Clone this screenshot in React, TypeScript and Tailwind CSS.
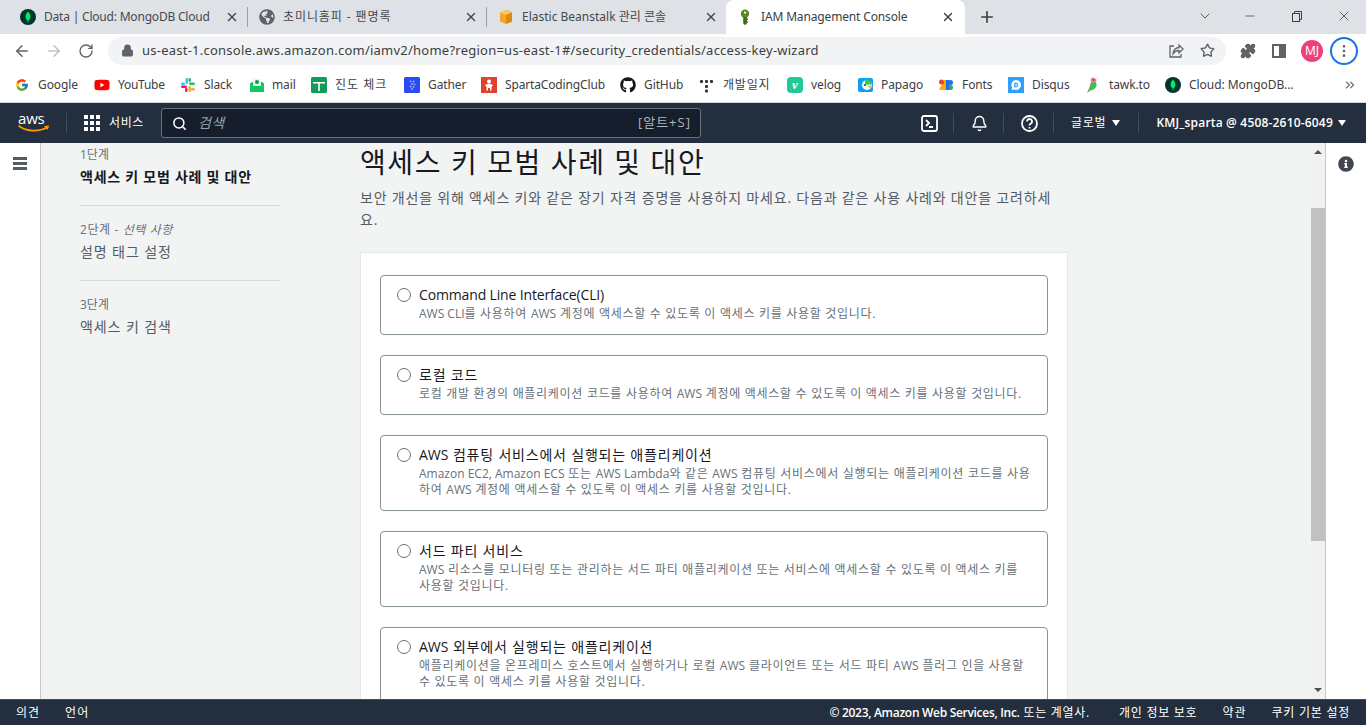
import type { ReactNode } from "react";
import {
  ArrowLeft,
  ArrowRight,
  RotateCw,
  Lock,
  Star,
  Puzzle,
  ChevronDown,
  Minus,
  X,
  Plus,
  Search,
  Bell,
  MoreVertical,
  ChevronsRight,
} from "lucide-react";
import { FaGithub, FaYoutube, FaInfoCircle, FaGlobeAmericas } from "react-icons/fa";
import { FcGoogle } from "react-icons/fc";

const uiFont = "font-['Noto_Sans','Noto_Sans_CJK_KR',sans-serif]";
const awsFont = "font-['Open_Sans','Noto_Sans_CJK_KR',sans-serif]";

function MongoLeaf({ size = 16 }: { size?: number }) {
  return (
    <svg width={size} height={size} viewBox="0 0 16 16" className="shrink-0">
      <circle cx="8" cy="8" r="8" fill="#023430" />
      <path d="M8 2.500c1.800 2 2.600 3.800 2.400 5.500-.2 1.700-1.200 3-2 3.500v2h-.8v-2c-.8-.5-1.800-1.800-2-3.500C5.400 6.300 6.200 4.500 8 2.500z" fill="#00ed64" />
    </svg>
  );
}

function BeanstalkIcon() {
  return (
    <svg width="16" height="16" viewBox="0 0 16 16" className="shrink-0">
      <path d="M8 1l6 2.500v9L8 15l-6-2.500v-9z" fill="#f5a623" />
      <path d="M8 1v14l6-2.500v-9z" fill="#d98a12" />
      <path d="M2 3.500L8 6l6-2.500L8 1z" fill="#fbc661" />
    </svg>
  );
}

function KeyIcon() {
  return (
    <svg width="16" height="16" viewBox="0 0 16 16" className="shrink-0">
      <circle cx="8" cy="4.800" r="4.200" fill="#5c8a24" />
      <circle cx="8" cy="3.600" r="1.100" fill="#fff" />
      <path d="M6.200 8h3.600v1.500h1.200V11H9.800v1h1v1.500h-1V15L8 16l-1.800-1.500z" fill="#3f6b1a" />
    </svg>
  );
}

const tabs = [
  { title: "Data | Cloud: MongoDB Cloud", text: "tracking-[-0.2px]", icon: <MongoLeaf /> },
  { title: "초미니홈피 - 팬명록", text: "tracking-[0.9px]", icon: <FaGlobeAmericas size={16} className="shrink-0 text-[#5f6368]" /> },
  { title: "Elastic Beanstalk 관리 콘솔", text: "tracking-normal", icon: <BeanstalkIcon /> },
];

function ChromeTabs() {
  return (
    <div className={`flex h-[34px] items-end bg-[#dee1e6] pl-[9px] ${uiFont}`}>
      {tabs.map((t, i) => (
        <div key={t.title} className="flex h-[34px] w-[239px] items-center pl-[11px] pr-2">
          {t.icon}
          <span className={`ml-2 flex-1 truncate text-xs text-[#45494d] ${t.text}`}>{t.title}</span>
          <X size={14} strokeWidth={2.4} className="text-[#45494d]" />
          {i < 2 && <div className="ml-2 mr-[-8px] h-5 w-px bg-[#9aa0a6]" />}
        </div>
      ))}
      <div className="flex h-[34px] w-[239px] items-center rounded-t-lg bg-white pl-[11px] pr-[10px]">
        <KeyIcon />
        <span className="ml-2 flex-1 truncate text-xs tracking-[-0.15px] text-[#3c4043]">IAM Management Console</span>
        <X size={14} strokeWidth={2.4} className="text-[#3c4043]" />
      </div>
      <Plus size={18} strokeWidth={2.2} className="mb-2 ml-[13px] text-[#3c4043]" />
      <div className="mb-[10px] ml-auto flex items-center text-[#3c4043]">
        <ChevronDown size={16} strokeWidth={1.2} className="mr-[30px]" />
        <Minus size={14} strokeWidth={1.2} className="mr-[34px]" />
        <svg width="12" height="12" viewBox="0 0 12 12" className="mr-[33px]" fill="none" stroke="currentColor">
          <rect x="1.500" y="3.500" width="7" height="8" />
          <path d="M3.500 3.500v-2h7v8h-2" />
        </svg>
        <X size={16} strokeWidth={1.2} className="mr-[14px]" />
      </div>
    </div>
  );
}

function AddressBar() {
  return (
    <div className={`flex h-[33px] items-center bg-white ${uiFont}`}>
      <ArrowLeft size={18} className="ml-[13px] text-[#5f6368]" />
      <ArrowRight size={18} className="ml-[14px] text-[#bdc1c6]" />
      <RotateCw size={16} className="ml-[15px] text-[#5f6368]" />
      <div className="ml-[14px] flex h-[28px] w-[1118px] items-center rounded-full bg-[#f1f3f4] pl-[13px]">
        <Lock size={13} className="fill-[#5f6368] text-[#5f6368]" />
        <span className="ml-2 text-[13px] tracking-[0.24px] text-[#3c4043]">us-east-1.console.aws.amazon.com/iamv2/home?region=us-east-1#/security_credentials/access-key-wizard</span>
        <svg width="16" height="16" viewBox="0 0 16 16" fill="none" stroke="#5f6368" strokeWidth="1.300" className="ml-auto">
          <path d="M6 3H2v11h11v-3" />
          <path d="M5 11c0-4 3-6.500 6-6.500V2l4 4-4 4V7.500C8.500 7.500 6.500 8.500 5 11z" />
        </svg>
        <Star size={15} strokeWidth={2.2} className="ml-4 mr-[11px] text-[#5f6368]" />
      </div>
      <Puzzle size={16} className="ml-[14px] fill-[#5f6368] text-[#5f6368]" />
      <svg width="14" height="14" viewBox="0 0 14 14" className="ml-[16px]">
        <path d="M0 0h14v14H0zM2 2v10h5V2z" fill="#5f6368" fillRule="evenodd" />
      </svg>
      <div className="ml-[15px] flex h-[22px] w-[22px] items-center justify-center rounded-full bg-[#ec407a] text-xs text-white">MJ</div>
      <div className="ml-[7px] flex h-[28px] w-[28px] items-center justify-center rounded-full border-2 border-[#1a73e8]">
        <MoreVertical size={16} className="text-[#5f6368]" />
      </div>
    </div>
  );
}

const bookmarks: { label: string; width: string; text?: string; icon: ReactNode }[] = [
  { label: "Google", width: "w-[79px]", text: "-ml-px tracking-[-0.1px]", icon: <FcGoogle size={14} /> },
  { label: "YouTube", width: "w-[86px]", text: "tracking-[-0.25px]", icon: <FaYoutube size={16} className="text-[#f00]" /> },
  {
    label: "Slack",
    width: "w-[69px]",
    text: "tracking-[-0.1px]",
    icon: (
      <svg width="16" height="16" viewBox="0 0 16 16">
        <rect x="5.500" y="1" width="2.500" height="6" rx="1.200" fill="#36c5f0" />
        <rect x="1" y="5.500" width="4" height="2.500" rx="1.200" fill="#36c5f0" />
        <rect x="1" y="8.500" width="6" height="2.500" rx="1.200" fill="#e01e5a" />
        <rect x="5" y="11" width="2.500" height="4" rx="1.200" fill="#e01e5a" />
        <rect x="8.500" y="9" width="2.500" height="6" rx="1.200" fill="#ecb22e" />
        <rect x="11" y="11" width="4" height="2.500" rx="1.200" fill="#ecb22e" />
        <rect x="9" y="5.500" width="6" height="2.500" rx="1.200" fill="#2eb67d" />
        <rect x="8.500" y="1" width="2.500" height="4" rx="1.200" fill="#2eb67d" />
      </svg>
    ),
  },
  {
    label: "mail",
    width: "w-[62px]",
    text: "-ml-px tracking-[-0.1px]",
    icon: (
      <svg width="16" height="16" viewBox="0 0 16 16">
        <path d="M1 6.500L8 2l7 4.500V15H1z" fill="#0fc15f" />
        <rect x="4" y="2" width="8" height="7" fill="#e8f7ee" />
        <circle cx="8" cy="5" r="2" fill="#0a9c4c" />
        <path d="M1 7l7 5 7-5v8H1z" fill="#12c863" />
      </svg>
    ),
  },
  {
    label: "진도 체크",
    width: "w-[93px]",
    text: "tracking-[1px]",
    icon: (
      <svg width="16" height="16" viewBox="0 0 16 16">
        <rect width="16" height="16" rx="1.500" fill="#0f9d58" />
        <path d="M2 5h12v1.500H8.800V14H7.200V6.500H2z" fill="#fff" />
      </svg>
    ),
  },
  {
    label: "Gather",
    width: "w-[77px]",
    text: "tracking-[-0.1px]",
    icon: (
      <svg width="16" height="16" viewBox="0 0 16 16">
        <rect width="16" height="16" rx="1.500" fill="#2b4bf2" />
        <g fill="#8fa4ff">
          <circle cx="6.500" cy="4.500" r="1" />
          <circle cx="9.500" cy="4.500" r="1" />
          <circle cx="8" cy="7" r="1" />
          <circle cx="10.500" cy="7.500" r="1" />
          <circle cx="6.500" cy="9.500" r="1" />
          <circle cx="9.500" cy="10" r="1" />
          <circle cx="8" cy="12" r="1" />
        </g>
      </svg>
    ),
  },
  {
    label: "SpartaCodingClub",
    width: "w-[139px]",
    text: "tracking-[-0.15px]",
    icon: (
      <svg width="16" height="16" viewBox="0 0 16 16">
        <rect width="16" height="16" fill="#e2412c" />
        <circle cx="8" cy="4.500" r="2" fill="#fff" />
        <path d="M4 8l4-1.500L12 8l-1.500 2v3.500H9V11H7v2.500H5.500V10z" fill="#fff" />
      </svg>
    ),
  },
  { label: "GitHub", width: "w-[79px]", text: "tracking-[-0.1px]", icon: <FaGithub size={16} className="text-[#181717]" /> },
  {
    label: "개발일지",
    width: "w-[88px]",
    text: "tracking-[0.8px]",
    icon: (
      <svg width="16" height="16" viewBox="0 0 16 16" fill="#333">
        <rect x="1" y="3" width="3" height="3" rx="1" />
        <rect x="6" y="3" width="3" height="3" rx="1" />
        <rect x="11" y="3" width="3" height="3" rx="1" />
        <rect x="6" y="8" width="3" height="3" rx="1" />
        <rect x="6" y="12.500" width="3" height="3" rx="1" />
      </svg>
    ),
  },
  {
    label: "velog",
    width: "w-[71px]",
    text: "tracking-[-0.1px]",
    icon: (
      <div className="flex h-4 w-4 items-center justify-center rounded-sm bg-[#20c997] font-['Liberation_Serif',serif] text-[13px] font-bold italic leading-none text-white">
        v
      </div>
    ),
  },
  {
    label: "Papago",
    width: "w-[80px]",
    text: "-ml-px tracking-[-0.1px]",
    icon: (
      <svg width="16" height="16" viewBox="0 0 16 16">
        <rect y="1" width="15" height="14" rx="2" fill="#0a9ef5" />
        <circle cx="9" cy="8" r="5" fill="#fff" />
        <path d="M8 2c3.500 0 6 2.500 6 5.500H8.500C7 7.500 6 5 8 2z" fill="#2ec866" />
        <path d="M9 8.500h6.500L12 11.500z" fill="#f6c026" />
        <circle cx="7" cy="8" r="1" fill="#1c2b3a" />
      </svg>
    ),
  },
  {
    label: "Fonts",
    width: "w-[70px]",
    text: "tracking-[-0.1px]",
    icon: (
      <svg width="16" height="16" viewBox="0 0 16 16">
        <path d="M1 13L6 3h2v10z" fill="#f9ab00" />
        <circle cx="3.500" cy="5" r="2.500" fill="#ea4335" />
        <path d="M8 3h3v10H8z" fill="#1a73e8" />
        <circle cx="12.500" cy="5.500" r="2.500" fill="#1a73e8" />
        <path d="M11 8h1.500a2.500 2.500 0 0 1 0 5H11z" fill="#34a853" />
      </svg>
    ),
  },
  {
    label: "Disqus",
    width: "w-[77px]",
    text: "tracking-[-0.1px]",
    icon: (
      <svg width="16" height="16" viewBox="0 0 16 16">
        <rect width="16" height="16" fill="#2e9fff" />
        <path d="M8 3a5 5 0 1 1-2 9.600L3.500 13l.7-2.300A5 5 0 0 1 8 3z" fill="#fff" />
        <path d="M6.200 5.800h1.900a2.200 2.200 0 0 1 0 4.400H6.200zM7.500 7v2h.6a1 1 0 0 0 0-2z" fill="#2e9fff" fillRule="evenodd" />
      </svg>
    ),
  },
  {
    label: "tawk.to",
    width: "w-[80px]",
    text: "tracking-[-0.1px]",
    icon: (
      <svg width="16" height="16" viewBox="0 0 16 16">
        <path d="M7 4c3-1 5 1 4.500 4.500C11 11.500 8 13 5.500 13.500L2 16l1.500-3.500C5 10 5 6 7 4z" fill="#49b855" />
        <circle cx="8" cy="3" r="2.500" fill="#ee7fa0" />
        <circle cx="8.500" cy="3" r=".7" fill="#222" />
        <path d="M10 2l2 1-2 1z" fill="#d9526f" />
      </svg>
    ),
  },
  { label: "Cloud: MongoDB...", width: "w-[178px]", text: "tracking-[-0.05px]", icon: <MongoLeaf /> },
];

function Bookmarks() {
  return (
    <div className={`flex h-[35px] items-center bg-white pl-[15px] ${uiFont}`}>
      {bookmarks.map((b) => (
        <div key={b.label} className={`flex shrink-0 items-center ${b.width}`}>
          <div className="flex w-[24px] shrink-0 items-center">{b.icon}</div>
          <span className={`whitespace-nowrap text-xs text-[#3c4043] ${b.text ?? ""}`}>{b.label}</span>
        </div>
      ))}
      <ChevronsRight size={14} className="text-[#5f6368]" />
    </div>
  );
}

function NavDivider({ className }: { className: string }) {
  return <div className={`h-5 w-px bg-[#414d5c] ${className}`} />;
}

function AwsNav() {
  return (
    <nav className={`flex h-[41px] items-center border-t border-[#d5dbdb] bg-[#232f3e] text-white ${awsFont}`}>
      <div className="relative ml-[18px] h-[30px] w-[32px] shrink-0">
        <span className="absolute left-0 top-[1px] text-[15px] leading-[18px] tracking-[-0.2px]">aws</span>
        <svg width="32" height="9" viewBox="0 0 32 9" className="absolute left-0 top-[17px]">
          <path d="M1 1c8 6 20 6 29 1" fill="none" stroke="#ff9900" strokeWidth="1.600" strokeLinecap="round" />
          <path d="M26 1l5-.5-1.500 4.500z" fill="#ff9900" />
        </svg>
      </div>
      <NavDivider className="ml-[16px]" />
      <svg width="16" height="16" viewBox="0 0 16 16" fill="#fff" className="ml-[17px]">
        {[0, 6, 12].flatMap((x) =>
          [0, 6, 12].map((y) => <rect key={`${x}-${y}`} x={x} y={y} width="4" height="4" />),
        )}
      </svg>
      <span className="ml-[9px] text-xs tracking-[0.6px]">서비스</span>
      <div className="ml-[17px] flex h-[30px] w-[540px] items-center rounded-[3px] border border-[#687078] bg-[#161e2d] pl-[10px] pr-[9px]">
        <Search size={15} strokeWidth={2.4} />
        <span className="ml-[11px] text-sm italic tracking-[0.5px] text-[#95a5a6]">검색</span>
        <span className="ml-auto text-[13px] tracking-[1px] text-[#aab7b8]">[알트+S]</span>
      </div>
      <svg width="17" height="17" viewBox="0 0 17 17" fill="none" stroke="#fff" strokeWidth="1.800" className="ml-[220px]">
        <rect x="1" y="1" width="15" height="15" rx="2" />
        <path d="M5 5l3 3-3 3M8 12h4" />
      </svg>
      <NavDivider className="ml-[15px]" />
      <Bell size={17} strokeWidth={2} className="ml-[17px]" />
      <NavDivider className="ml-[15px]" />
      <svg width="17" height="17" viewBox="0 0 17 17" fill="none" stroke="#fff" strokeWidth="1.800" className="ml-[17px]">
        <circle cx="8.500" cy="8.500" r="7.500" />
        <path d="M6 6.500a2.500 2.500 0 1 1 3.500 2.300c-.7.4-1 .8-1 1.700M8.500 12v1.500" />
      </svg>
      <NavDivider className="ml-[15px]" />
      <span className="ml-[17px] text-xs tracking-[0.8px]">글로벌</span>
      <span className="ml-[6px] h-0 w-0 border-x-[4px] border-t-[6px] border-x-transparent border-t-white" />
      <NavDivider className="ml-[18px]" />
      <span className="ml-[17px] text-xs font-semibold tracking-[0.18px]">KMJ_sparta @ 4508-2610-6049</span>
      <span className="ml-[5px] h-0 w-0 border-x-[4px] border-t-[6px] border-x-transparent border-t-white" />
    </nav>
  );
}

function WizardSteps() {
  return (
    <aside className="ml-[39px] w-[200px] shrink-0 pt-[4px]">
      <p className="text-xs leading-4 text-[#687078]">1단계</p>
      <p className="mt-[3px] border-b border-[#d5dbdb] pb-[17px] text-sm font-semibold leading-[22px] tracking-[0.75px] text-[#16191f]">
        액세스 키 모범 사례 및 대안
      </p>
      <p className="mt-4 text-xs leading-4 tracking-[0.6px] text-[#687078]">
        2단계 - <span className="italic">선택 사항</span>
      </p>
      <p className="mt-[3px] border-b border-[#d5dbdb] pb-[17px] text-sm leading-[22px] tracking-[0.9px] text-[#545b64]">설명 태그 설정</p>
      <p className="mt-4 text-xs leading-4 text-[#687078]">3단계</p>
      <p className="mt-[3px] text-sm leading-[22px] tracking-[0.9px] text-[#545b64]">액세스 키 검색</p>
    </aside>
  );
}

// latin runs keep normal spacing, only the Korean needs widening
function L({ children }: { children: ReactNode }) {
  return <span className="tracking-normal">{children}</span>;
}

const options: { key: string; title: ReactNode; desc: ReactNode }[] = [
  {
    key: "cli",
    title: <span className="tracking-[-0.15px]">Command Line Interface(CLI)</span>,
    desc: (
      <>
        <L>AWS CLI</L>를 사용하여 <L>AWS</L> 계정에 액세스할 수 있도록 이 액세스 키를 사용할 것입니다.
      </>
    ),
  },
  {
    key: "local",
    title: "로컬 코드",
    desc: (
      <>
        로컬 개발 환경의 애플리케이션 코드를 사용하여 <L>AWS</L> 계정에 액세스할 수 있도록 이 액세스 키를 사용할 것입니다.
      </>
    ),
  },
  {
    key: "compute",
    title: (
      <>
        <L>AWS</L> 컴퓨팅 서비스에서 실행되는 애플리케이션
      </>
    ),
    desc: (
      <>
        <L>Amazon EC2, Amazon ECS</L> 또는 <L>AWS Lambda</L>와 같은 <L>AWS</L> 컴퓨팅 서비스에서 실행되는 애플리케이션 코드를 사용
        <br />
        하여 <L>AWS</L> 계정에 액세스할 수 있도록 이 액세스 키를 사용할 것입니다.
      </>
    ),
  },
  {
    key: "third",
    title: "서드 파티 서비스",
    desc: (
      <>
        <L>AWS</L> 리소스를 모니터링 또는 관리하는 서드 파티 애플리케이션 또는 서비스에 액세스할 수 있도록 이 액세스 키를
        <br />
        사용할 것입니다.
      </>
    ),
  },
  {
    key: "outside",
    title: (
      <>
        <L>AWS</L> 외부에서 실행되는 애플리케이션
      </>
    ),
    desc: (
      <>
        애플리케이션을 온프레미스 호스트에서 실행하거나 로컬 <L>AWS</L> 클라이언트 또는 서드 파티 <L>AWS</L> 플러그 인을 사용할
        <br />수 있도록 이 액세스 키를 사용할 것입니다.
      </>
    ),
  },
];

function OptionCard({ title, desc }: { title: ReactNode; desc: ReactNode }) {
  return (
    <label className="flex rounded-sm border border-[#879596] pb-3 pl-[16px] pr-[10px] pt-[9px]">
      <span className="mt-[3px] h-[14px] w-[14px] shrink-0 rounded-full border border-[#687078] bg-white" />
      <span className="ml-2 block whitespace-nowrap">
        <span className="block text-sm leading-5 tracking-[0.8px] text-[#16191f]">{title}</span>
        <span className="mt-px block text-xs leading-4 tracking-[0.7px] text-[#687078]">{desc}</span>
      </span>
    </label>
  );
}

function MainColumn() {
  return (
    <section className="ml-[80px] w-[708px] shrink-0">
      <h1 className="pt-px text-[28px] font-normal leading-9 tracking-[1.6px] text-[#16191f]">액세스 키 모범 사례 및 대안</h1>
      <p className="mt-[7px] whitespace-nowrap text-sm leading-[22px] tracking-[0.8px] text-[#545b64]">
        보안 개선을 위해 액세스 키와 같은 장기 자격 증명을 사용하지 마세요. 다음과 같은 사용 사례와 대안을 고려하세
        <br />
        요.
      </p>
      <div className="mt-[21px] flex flex-col gap-5 border border-b-0 border-[#e4e7e7] bg-white px-[19px] pb-5 pt-[22px]">
        {options.map((o) => (
          <OptionCard key={o.key} title={o.title} desc={o.desc} />
        ))}
      </div>
    </section>
  );
}

function Scrollbar() {
  return (
    <div className="relative ml-auto flex w-[14px] shrink-0 flex-col items-center bg-[#f1f1f1]">
      <span className="mt-[7px] h-0 w-0 border-x-[4px] border-b-[4px] border-x-transparent border-b-[#505050]" />
      <div className="mt-[54px] h-[333px] w-full bg-[#c1c1c1]" />
      <span className="mb-[7px] mt-auto h-0 w-0 border-x-[4px] border-t-[4px] border-x-transparent border-t-[#505050]" />
    </div>
  );
}

function Footer() {
  return (
    <footer className={`flex h-[26px] items-center border-t border-[#414d5c] bg-[#232f3e] text-xs text-white ${awsFont}`}>
      <span className="ml-4 tracking-[1px]">의견</span>
      <span className="ml-[25px] tracking-[1px]">언어</span>
      <span className="ml-auto font-semibold tracking-[-0.3px]">© 2023, Amazon Web Services, Inc.</span>
      <span className="ml-[4px] tracking-[0.7px]">또는 계열사.</span>
      <span className="ml-[29px] tracking-[0.75px]">개인 정보 보호</span>
      <span className="ml-[25px] tracking-[1px]">약관</span>
      <span className="ml-[25px] mr-4 tracking-[0.75px]">쿠키 기본 설정</span>
    </footer>
  );
}

export default function App() {
  return (
    <div className="flex h-[725px] w-[1366px] flex-col overflow-hidden bg-white">
      <ChromeTabs />
      <AddressBar />
      <Bookmarks />
      <AwsNav />
      <div className={`flex min-h-0 flex-1 ${awsFont}`}>
        <div className="flex w-[41px] shrink-0 justify-center border-r border-[#c4c8c8] bg-white pt-[14px]">
          <div className="flex h-[13px] w-[14px] flex-col justify-between">
            <span className="h-[3px] bg-[#545b64]" />
            <span className="h-[3px] bg-[#545b64]" />
            <span className="h-[3px] bg-[#545b64]" />
          </div>
        </div>
        <div className="flex min-w-0 flex-1 overflow-hidden bg-[#f2f3f3]">
          <WizardSteps />
          <MainColumn />
          <Scrollbar />
        </div>
        <div className="flex w-[41px] shrink-0 justify-center border-l border-[#c4c8c8] bg-white pt-[13px]">
          <FaInfoCircle size={16} className="text-[#414750]" />
        </div>
      </div>
      <Footer />
    </div>
  );
}
